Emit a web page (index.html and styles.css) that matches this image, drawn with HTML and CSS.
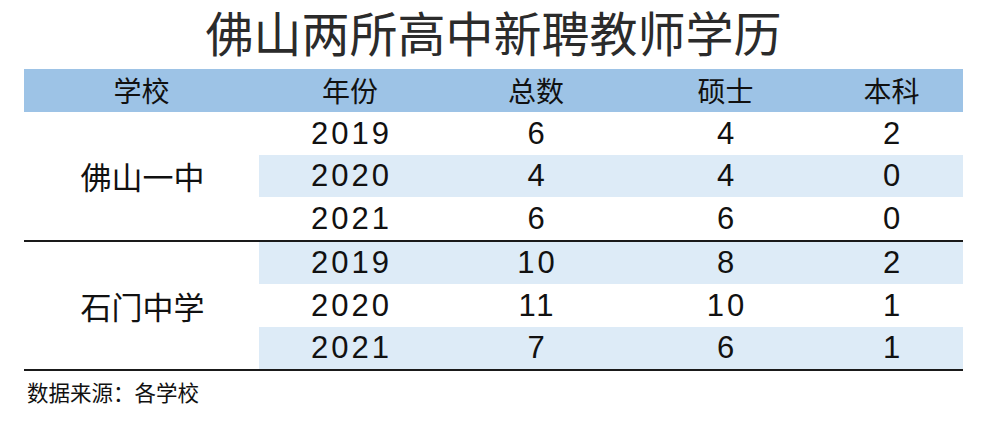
FILE: index.html
```html
<!DOCTYPE html>
<html lang="zh-CN">
<head>
<meta charset="utf-8">
<title>佛山两所高中新聘教师学历</title>
<link rel="stylesheet" href="styles.css">
</head>
<body>
<div class="page">
  <h1 class="title">佛山两所高中新聘教师学历</h1>
  <div class="table">
    <div class="row head">
      <div class="cell">学校</div>
      <div class="cell">年份</div>
      <div class="cell">总数</div>
      <div class="cell">硕士</div>
      <div class="cell">本科</div>
    </div>
    <div class="group">
      <div class="school">佛山一中</div>
      <div class="cell num">2019</div><div class="cell num">6</div><div class="cell num">4</div><div class="cell num">2</div>
      <div class="cell num alt">2020</div><div class="cell num alt">4</div><div class="cell num alt">4</div><div class="cell num alt">0</div>
      <div class="cell num">2021</div><div class="cell num">6</div><div class="cell num">6</div><div class="cell num">0</div>
    </div>
    <div class="group">
      <div class="school">石门中学</div>
      <div class="cell num alt">2019</div><div class="cell num alt">10</div><div class="cell num alt">8</div><div class="cell num alt">2</div>
      <div class="cell num">2020</div><div class="cell num">11</div><div class="cell num">10</div><div class="cell num">1</div>
      <div class="cell num alt">2021</div><div class="cell num alt">7</div><div class="cell num alt">6</div><div class="cell num alt">1</div>
    </div>
  </div>
  <p class="source">数据来源：各学校</p>
</div>
</body>
</html>
```

FILE: styles.css
```css
html, body {
  margin: 0;
  padding: 0;
  background: #ffffff;
}

body {
  font-family: "Liberation Sans", "Noto Sans CJK SC", sans-serif;
  color: #111111;
}

.page {
  width: 939px;
  margin: 0 auto;
  padding-top: 2px;
}

.title {
  margin: 0 0 9px 0;
  font-family: "Noto Sans CJK SC", sans-serif;
  font-weight: 400;
  font-size: 48px;
  line-height: 58px;
  text-align: center;
  color: #2b2b2b;
}

.row,
.group {
  display: grid;
  grid-template-columns: 235px 182px 190px 189px 143px;
}

.head {
  height: 43px;
  background: #9dc3e6;
}

.head .cell {
  font-family: "Noto Sans CJK SC", sans-serif;
  font-size: 28px;
}

.group {
  grid-auto-rows: 42.5px;
  border-bottom: 2px solid #1a1a1a;
}

.cell {
  display: flex;
  align-items: center;
  justify-content: center;
  line-height: 1.2;
}

.school {
  grid-row: span 3;
  display: flex;
  align-items: center;
  justify-content: center;
  font-family: "Noto Sans CJK SC", sans-serif;
  font-size: 31px;
  padding-left: 2px;
}

.num {
  font-size: 31px;
  letter-spacing: 3px;
  text-indent: 3px;
}

.alt {
  background: #ddebf7;
}

.source {
  margin: 8px 0 0 3px;
  font-family: "Noto Sans CJK SC", sans-serif;
  font-size: 21.5px;
  line-height: 26px;
  color: #111111;
}
```
